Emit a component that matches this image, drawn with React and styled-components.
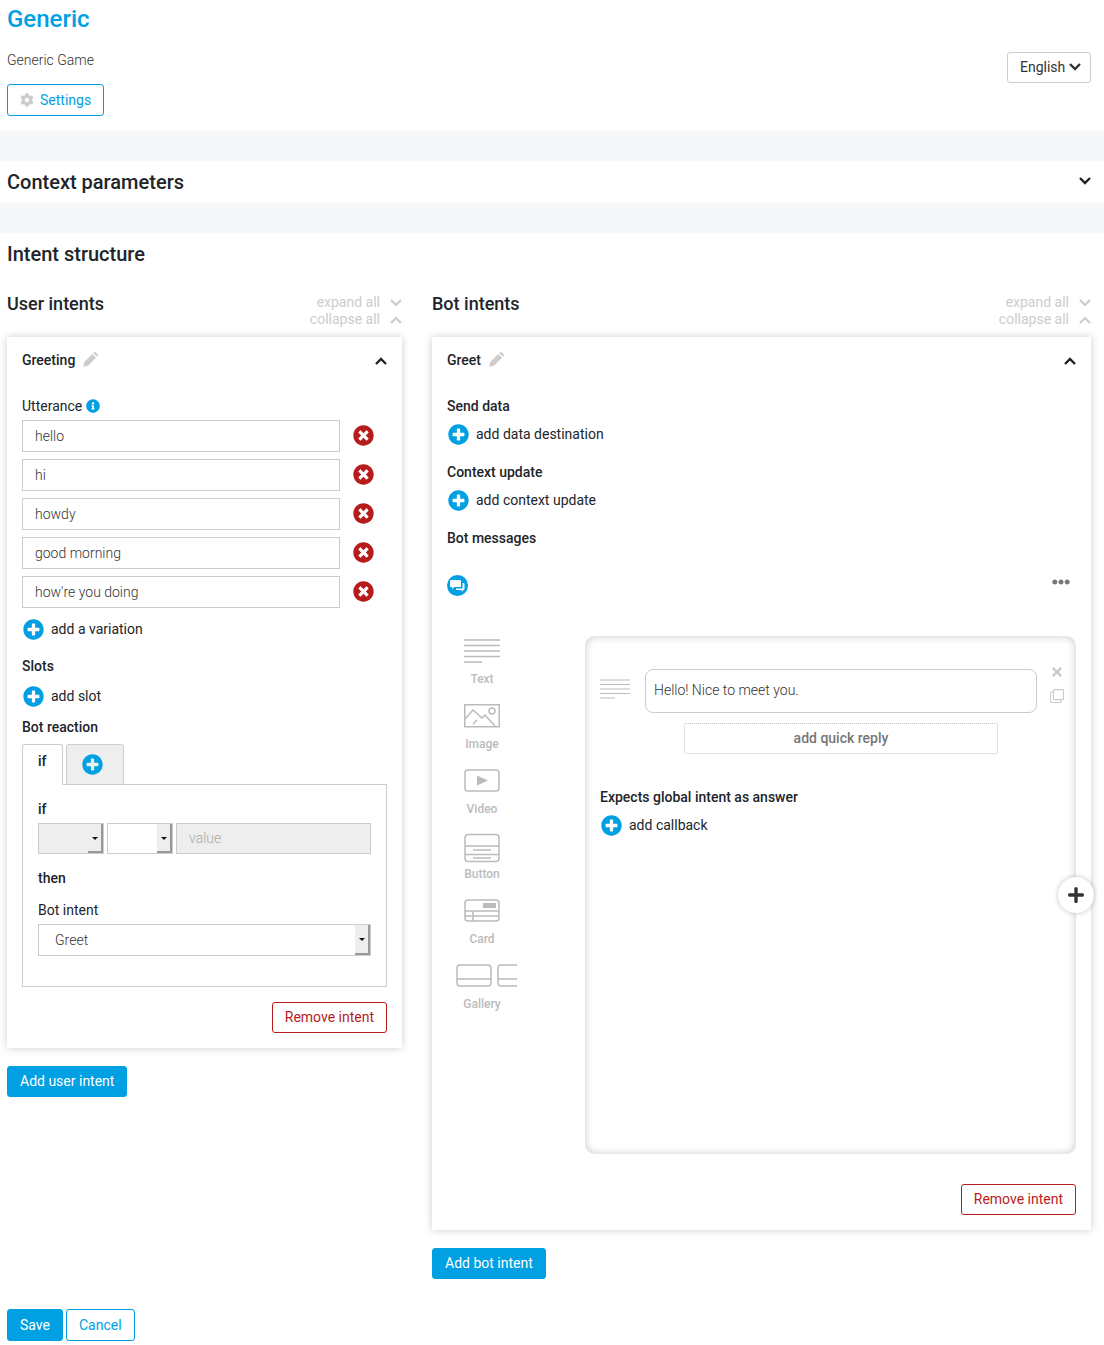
import React from "react";
import styled, { createGlobalStyle } from "styled-components";
import {
  FaPlusCircle,
  FaTimesCircle,
  FaCog,
  FaInfoCircle,
  FaPlus,
  FaTimes,
  FaEllipsisH,
} from "react-icons/fa";

const Global = createGlobalStyle`
  html, body { margin: 0; padding: 0; background: #fff; }
  body { font-family: Roboto, "Liberation Sans", sans-serif; font-size: 14px; line-height: 20px; color: #212529; }
  * { box-sizing: border-box; }
`;

const Page = styled.div`
  width: 1104px;
  min-height: 1345px;
`;
const Header = styled.header`
  display: flex;
  justify-content: space-between;
  align-items: center;
  padding: 0 13px 15px 7px;
`;
const Title = styled.h1`
  margin: 0;
  font-size: 24px;
  line-height: 38px;
  font-weight: 500;
  color: #00a0e3;
`;
const Subtitle = styled.div`
  margin: 12px 0 14px;
  font-weight: 300;
  color: #333;
`;
const Button = styled.button`
  display: inline-flex;
  align-items: center;
  gap: 6px;
  height: ${(p) => p.$h || 31}px;
  padding: 0 12px ${(p) => (p.$h ? 0 : 2)}px;
  border-radius: 3px;
  font: 400 14px/20px Roboto, sans-serif;
  cursor: pointer;
  background: ${(p) => (p.$variant === "primary" ? "#00a0e3" : "#fff")};
  color: ${(p) => (p.$variant === "primary" ? "#fff" : p.$variant === "danger" ? "#b71c1c" : "#00a0e3")};
  border: 1px solid ${(p) => (p.$variant === "danger" ? "#b71c1c" : "#00a0e3")};
`;
const LangButton = styled.button`
  display: inline-flex;
  align-items: center;
  justify-content: space-between;
  width: 84px;
  height: 31px;
  margin-top: 18px;
  padding: 0 9px 0 12px;
  background: #fff;
  border: 1px solid #ccc;
  border-radius: 3px;
  font: 400 14px/20px Roboto, sans-serif;
  color: #333;
`;
const Band = styled.div`
  height: 30px;
  background: #f6f7f9;
`;
const SectionRow = styled.div`
  display: flex;
  justify-content: space-between;
  align-items: center;
  height: 42px;
  padding: 0 13px 0 7px;
`;
const SectionTitle = styled.h2`
  margin: 0;
  font-size: 20px;
  line-height: 24px;
  font-weight: 500;
  color: #212529;
`;
const Columns = styled.div`
  display: grid;
  grid-template-columns: 395px 659px;
  gap: 30px;
  align-items: start;
  padding: 19px 13px 0 7px;
`;
const ColumnHead = styled.div`
  display: flex;
  justify-content: space-between;
  height: 34px;
  margin-bottom: 9px;
`;
const ColumnTitle = styled.h3`
  margin: 0;
  font-size: 18px;
  line-height: 20px;
  font-weight: 500;
`;
const ExpandLinks = styled.div`
  display: flex;
  flex-direction: column;
  align-items: flex-end;
  color: #ccc;
  line-height: 17px;
  font-weight: 400;
`;
const ExpandLink = styled.div`
  display: flex;
  align-items: center;
  gap: 10px;
`;
const Card = styled.section`
  background: #fff;
  padding: 13px 15px 15px;
  box-shadow: 0 0 8px rgba(0, 0, 0, 0.2);
`;
const CardHead = styled.div`
  display: flex;
  align-items: center;
  justify-content: space-between;
  height: 20px;
`;
const CardName = styled.div`
  display: flex;
  align-items: center;
  gap: 8px;
  font-weight: 500;
`;
const PencilIcon = styled.svg`
  display: block;
  margin-top: -1px;
`;
const Chevron = styled.svg`
  display: block;
  margin-top: ${(p) => p.$mt || 0}px;
`;
const Label = styled.div`
  display: flex;
  align-items: center;
  gap: 4px;
  height: 20px;
  margin-top: ${(p) => p.$mt || 0}px;
  font-weight: ${(p) => (p.$bold ? 500 : 400)};
`;
const UtteranceList = styled.div`
  display: flex;
  flex-direction: column;
  gap: 7px;
  margin-top: 4px;
`;
const UtteranceRow = styled.div`
  display: flex;
  align-items: center;
  gap: 13px;
`;
const RemoveIcon = styled(FaTimesCircle)`
  margin-top: -2px;
`;
const TextInput = styled.input`
  width: ${(p) => p.$w || "318px"};
  min-width: 0;
  height: ${(p) => p.$h || 32}px;
  padding: 0 12px;
  border: 1px solid #ccc;
  border-radius: 0;
  background: ${(p) => (p.disabled ? "#eee" : "#fff")};
  font: 300 14px/20px Roboto, sans-serif;
  color: #333;
  outline: none;
  &::placeholder { color: #aaa; opacity: 1; }
`;
const MessageInput = styled(TextInput)`
  border-radius: 8px;
  padding: 0 8px 2px;
`;
const AddRow = styled.div`
  display: flex;
  align-items: center;
  gap: 7px;
  height: 20px;
  margin-top: ${(p) => p.$mt || 0}px;
  padding-left: 1px;
`;
const Tabs = styled.div`
  display: flex;
  gap: 3px;
  margin-top: 7px;
  margin-bottom: -1px;
`;
const Tab = styled.div`
  position: relative;
  display: flex;
  height: 41px;
  padding: ${(p) => (p.$active ? "6px 15px 0" : "9px 15px 0")};
  width: ${(p) => (p.$active ? "41px" : "58px")};
  border: 1px solid #ccc;
  border-bottom-color: ${(p) => (p.$active ? "#fff" : "#ccc")};
  border-radius: 3px 3px 0 0;
  background: ${(p) => (p.$active ? "#fff" : "#eee")};
  font-weight: 500;
`;
const TabBody = styled.div`
  border: 1px solid #ccc;
  padding: 14px 15px 30px;
`;
const ConditionRow = styled.div`
  display: flex;
  gap: 3px;
  margin-top: 4px;
`;
const SelectBox = styled.div`
  display: flex;
  align-items: center;
  width: ${(p) => p.$w || "66px"};
  height: ${(p) => p.$h || 31}px;
  margin-top: ${(p) => p.$mt || 0}px;
  padding-left: 16px;
  border: 1px solid #ccc;
  background: ${(p) => (p.$off ? "#eee" : "#fff")};
  font-weight: 300;
  color: #333;
`;
const SelectArrow = styled.div`
  display: flex;
  align-items: center;
  justify-content: center;
  align-self: stretch;
  width: 15px;
  margin-left: auto;
  background: #eee;
  box-shadow: inset -2px -2px 0 #999;
  &::after {
    content: "";
    margin: -1px 2px 0 0;
    border-left: 3px solid transparent;
    border-right: 3px solid transparent;
    border-top: 3px solid #111;
  }
`;
const ValueInput = styled(TextInput)`
  height: 31px;
  padding-bottom: 2px;
`;
const ActionRow = styled.div`
  display: flex;
  justify-content: flex-end;
  margin-top: ${(p) => p.$mt || 15}px;
`;
const BelowCard = styled.div`
  margin-top: 18px;
`;
const MessageBar = styled.div`
  display: flex;
  justify-content: space-between;
  height: 20px;
  margin-top: 27px;
`;
const MoreIcon = styled(FaEllipsisH)`
  margin: -2px 6px 0 0;
`;
const Composer = styled.div`
  display: grid;
  grid-template-columns: 70px 491px;
  gap: 68px;
  margin-top: 41px;
`;
const Palette = styled.div`
  padding-top: 3px;
`;
const PaletteItem = styled.div`
  display: flex;
  flex-direction: column;
  align-items: center;
  height: 65px;
`;
const PaletteIcon = styled.svg`
  display: block;
  height: 32px;
  margin-left: ${(p) => p.$shift || 0}px;
  overflow: visible;
`;
const PaletteLabel = styled.div`
  font-size: 12px;
  line-height: 16px;
  font-weight: 500;
  color: #bbb;
`;
const Panel = styled.div`
  position: relative;
  height: 518px;
  padding: 33px 12px 0 15px;
  border-radius: 10px;
  background: #fff;
  box-shadow: inset 0 0 8px rgba(0, 0, 0, 0.22);
`;
const MessageRow = styled.div`
  display: flex;
  align-items: flex-start;
  gap: 15px;
`;
const LinesIcon = styled.svg`
  display: block;
  margin-top: 10px;
  flex: none;
`;
const MessageActions = styled.div`
  display: flex;
  flex-direction: column;
  align-items: center;
  gap: 10px;
  margin: -4px 0 0 -2px;
  color: #ccc;
`;
const QuickReply = styled.div`
  width: 314px;
  height: 31px;
  margin: 10px 0 0 84px;
  border: 1px dotted #c4c4c4;
  border-radius: 2px;
  text-align: center;
  line-height: 28px;
  font-weight: 500;
  color: #777;
`;
const FloatingAdd = styled.div`
  position: absolute;
  top: 241px;
  right: -18px;
  display: flex;
  align-items: center;
  justify-content: center;
  width: 36px;
  height: 36px;
  border-radius: 50%;
  background: #fff;
  box-shadow: 0 0 5px rgba(0, 0, 0, 0.25);
  color: #333;
`;
const Footer = styled.div`
  display: flex;
  gap: 3px;
  margin-top: 30px;
  padding-left: 7px;
`;
const MessageBadge = styled.svg`
  display: block;
`;

const BLUE = "#00a0e3";
const RED = "#b71c1c";

const Up = ({ color = "#222", sw = 2.4, ...r }) => (
  <Chevron width={12} height={8} viewBox="0 0 12 8" {...r}>
    <path d="M1 7l5-5 5 5" fill="none" stroke={color} strokeWidth={sw} />
  </Chevron>
);
const Down = ({ color = "#222", sw = 2.4, ...r }) => (
  <Chevron width={12} height={8} viewBox="0 0 12 8" {...r}>
    <path d="M1 1l5 5 5-5" fill="none" stroke={color} strokeWidth={sw} />
  </Chevron>
);

const Add = ({ children, mt }) => (
  <AddRow $mt={mt}>
    <FaPlusCircle size={21} color={BLUE} />
    {children}
  </AddRow>
);

const Expanders = () => (
  <ExpandLinks>
    <ExpandLink>expand all <Down color="#ccc" sw={2.2} /></ExpandLink>
    <ExpandLink>collapse all <Up color="#ccc" sw={2.2} /></ExpandLink>
  </ExpandLinks>
);

const Name = ({ children }) => (
  <CardName>
    {children}
    <PencilIcon width="15" height="15" viewBox="0 0 15 15">
      <path d="M0.300 14.700L1.200 10L9.300 2L13 5.700L5 13.800Z" fill="#ccc" />
      <path d="M10.200 1.100L11 0.400a1.300 1.300 0 0 1 1.800 0L14.600 2.200a1.300 1.300 0 0 1 0 1.800L13.900 4.800Z" fill="#ccc" />
    </PencilIcon>
  </CardName>
);

const utterances = ["hello", "hi", "howdy", "good morning", "how're you doing"];

const palette = [
  {
    label: "Text",
    w: 36,
    art: (
      <g stroke="#bbb" strokeWidth="1.400">
        <path d="M0 1H36M0 6.500H36M0 12H36M0 17.500H36M0 23H18" />
      </g>
    ),
  },
  {
    label: "Image",
    w: 36,
    art: (
      <g fill="none" stroke="#bbb" strokeWidth="1.500">
        <rect x="0.750" y="0.750" width="34.500" height="22" />
        <path d="M1 15l8-9 9 8 3-3 10 11M13 16l-4 4" />
        <circle cx="28" cy="7" r="3" />
      </g>
    ),
  },
  {
    label: "Video",
    w: 36,
    art: (
      <g>
        <rect x="1" y="1" width="34" height="21" rx="3" fill="none" stroke="#bbb" strokeWidth="1.500" />
        <path d="M13 6.500l11 5-11 5z" fill="#bbb" />
      </g>
    ),
  },
  {
    label: "Button",
    w: 36,
    art: (
      <g fill="none" stroke="#bbb" strokeWidth="1.500">
        <rect x="1" y="0.500" width="34" height="27" rx="3" />
        <path d="M1 12H35M9 16H27M1 20.500H35M9 24H27" />
      </g>
    ),
  },
  {
    label: "Card",
    w: 36,
    art: (
      <g fill="none" stroke="#bbb" strokeWidth="1.500">
        <rect x="1" y="1" width="34" height="21" rx="3" />
        <path d="M1 12H35M1 17H35M9 12V22" />
        <rect x="19" y="4" width="13" height="5" fill="#bbb" stroke="none" />
      </g>
    ),
  },
  {
    label: "Gallery",
    w: 61,
    shift: 9,
    art: (
      <g fill="none" stroke="#bbb" strokeWidth="1.500">
        <rect x="1" y="1" width="34" height="21" rx="3" />
        <path d="M1 15H35M61 1H45a3 3 0 0 0-3 3V19a3 3 0 0 0 3 3H61M42 15H61" />
      </g>
    ),
  },
];

export default function App() {
  return (
    <Page>
      <Global />
      <Header>
        <div>
          <Title>Generic</Title>
          <Subtitle>Generic Game</Subtitle>
          <Button $h={32}>
            <FaCog size={14} color="#ccc" />
            Settings
          </Button>
        </div>
        <LangButton>
          English
          <Down color="#333" />
        </LangButton>
      </Header>
      <Band />
      <SectionRow>
        <SectionTitle>Context parameters</SectionTitle>
        <Down color="#222" $mt={-3} />
      </SectionRow>
      <Band />
      <SectionRow>
        <SectionTitle>Intent structure</SectionTitle>
      </SectionRow>
      <Columns>
        <div>
          <ColumnHead>
            <ColumnTitle>User intents</ColumnTitle>
            <Expanders />
          </ColumnHead>
          <Card>
            <CardHead>
              <Name>Greeting</Name>
              <Up $mt={2} />
            </CardHead>
            <Label $mt={26}>
              Utterance
              <FaInfoCircle size={14} color={BLUE} />
            </Label>
            <UtteranceList>
              {utterances.map((u) => (
                <UtteranceRow key={u}>
                  <TextInput readOnly value={u} />
                  <RemoveIcon size={21} color={RED} />
                </UtteranceRow>
              ))}
            </UtteranceList>
            <Add mt={11}>add a variation</Add>
            <Label $bold $mt={17}>Slots</Label>
            <Add mt={10}>add slot</Add>
            <Label $bold $mt={11}>Bot reaction</Label>
            <Tabs>
              <Tab $active>if</Tab>
              <Tab>
                <FaPlusCircle size={21} color={BLUE} />
              </Tab>
            </Tabs>
            <TabBody>
              <Label $bold>if</Label>
              <ConditionRow>
                <SelectBox $off>
                  <SelectArrow />
                </SelectBox>
                <SelectBox>
                  <SelectArrow />
                </SelectBox>
                <ValueInput disabled placeholder="value" $w="195px" />
              </ConditionRow>
              <Label $bold $mt={14}>then</Label>
              <Label $mt={12}>Bot intent</Label>
              <SelectBox $w="333px" $h={32} $mt={4}>
                Greet
                <SelectArrow />
              </SelectBox>
            </TabBody>
            <ActionRow>
              <Button $variant="danger">Remove intent</Button>
            </ActionRow>
          </Card>
          <BelowCard>
            <Button $variant="primary">Add user intent</Button>
          </BelowCard>
        </div>
        <div>
          <ColumnHead>
            <ColumnTitle>Bot intents</ColumnTitle>
            <Expanders />
          </ColumnHead>
          <Card>
            <CardHead>
              <Name>Greet</Name>
              <Up $mt={2} />
            </CardHead>
            <Label $bold $mt={26}>Send data</Label>
            <Add mt={8}>add data destination</Add>
            <Label $bold $mt={18}>Context update</Label>
            <Add mt={8}>add context update</Add>
            <Label $bold $mt={18}>Bot messages</Label>
            <MessageBar>
              <MessageBadge width="21" height="21" viewBox="0 0 21 21">
                <circle cx="10.500" cy="10.500" r="10.500" fill={BLUE} />
                <path d="M4 5h9a1 1 0 0 1 1 1v5a1 1 0 0 1-1 1H7.500L5 14v-2H4a1 1 0 0 1-1-1V6a1 1 0 0 1 1-1z" fill="#fff" />
                <path d="M15.500 8h1a1 1 0 0 1 1 1v5a1 1 0 0 1-1 1H16v1.500L14 15H9v-1.500h6.500z" fill="#fff" />
              </MessageBadge>
              <MoreIcon size={18} color="#777" />
            </MessageBar>
            <Composer>
              <Palette>
                {palette.map((p) => (
                  <PaletteItem key={p.label}>
                    <PaletteIcon width={p.w} viewBox={`0 0 ${p.w} 32`} $shift={p.shift}>{p.art}</PaletteIcon>
                    <PaletteLabel>{p.label}</PaletteLabel>
                  </PaletteItem>
                ))}
              </Palette>
              <Panel>
                <MessageRow>
                  <LinesIcon width="30" height="20" viewBox="0 0 30 20">
                    <g stroke="#bbb" strokeWidth="1.200">
                      <path d="M0 1H30M0 5.500H30M0 10H30M0 14.500H30M0 19H15" />
                    </g>
                  </LinesIcon>
                  <MessageInput readOnly value="Hello! Nice to meet you." $w="392px" $h={44} />
                  <MessageActions>
                    <FaTimes size={14} />
                    <svg width="14" height="14" viewBox="0 0 14 14" fill="none" stroke="#ccc" strokeWidth="1.200">
                      <rect x="3.500" y="0.600" width="10" height="10" rx="1" />
                      <path d="M3.500 3H1.500a1 1 0 0 0-1 1v8.500a1 1 0 0 0 1 1H10a1 1 0 0 0 1-1V10.500" />
                    </svg>
                  </MessageActions>
                </MessageRow>
                <QuickReply>add quick reply</QuickReply>
                <Label $bold $mt={33}>Expects global intent as answer</Label>
                <Add mt={8}>add callback</Add>
                <FloatingAdd>
                  <FaPlus size={18} />
                </FloatingAdd>
              </Panel>
            </Composer>
            <ActionRow $mt={30}>
              <Button $variant="danger">Remove intent</Button>
            </ActionRow>
          </Card>
          <BelowCard>
            <Button $variant="primary">Add bot intent</Button>
          </BelowCard>
        </div>
      </Columns>
      <Footer>
        <Button $variant="primary" $h={32}>Save</Button>
        <Button $h={32}>Cancel</Button>
      </Footer>
    </Page>
  );
}
